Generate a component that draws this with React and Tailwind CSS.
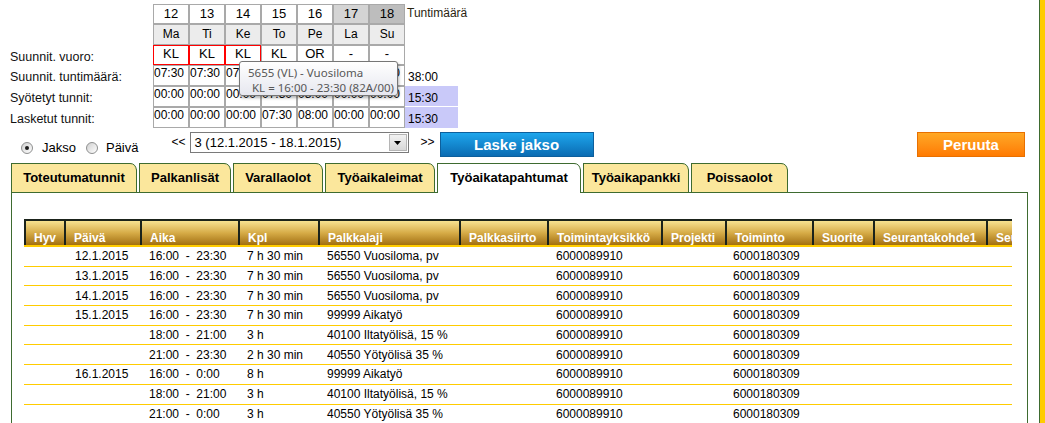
import React from "react";

const days = [
  { n: "12", d: "Ma", v: "KL", red: true, p: "07:30", s: "00:00", l: "00:00", nbg: "bg-white" },
  { n: "13", d: "Ti", v: "KL", red: true, p: "07:30", s: "00:00", l: "00:00", nbg: "bg-white" },
  { n: "14", d: "Ke", v: "KL", red: true, p: "07:30", s: "00:00", l: "00:00", nbg: "bg-white" },
  { n: "15", d: "To", v: "KL", red: false, p: "07:30", s: "07:30", l: "07:30", nbg: "bg-white" },
  { n: "16", d: "Pe", v: "OR", red: false, p: "08:00", s: "08:00", l: "08:00", nbg: "bg-white" },
  { n: "17", d: "La", v: "-", red: false, p: "00:00", s: "00:00", l: "00:00", nbg: "bg-[#d4d4d4]" },
  { n: "18", d: "Su", v: "-", red: false, p: "00:00", s: "00:00", l: "00:00", nbg: "bg-[#bdbdbd]" },
];

const cellBase = "w-[36px] h-full shrink-0 border";

function Label({ children }) {
  return (
    <div className="w-[153px] shrink-0 h-full pl-[10px] flex items-center pt-[3px] text-[12.5px] leading-[14px] text-[#111]">
      {children}
    </div>
  );
}

function TopGrid() {
  return (
    <div className="relative pt-[4px] h-[128px]">
      <div className="flex h-[20px]">
        <div className="w-[153px] shrink-0" />
        {days.map((x) => (
          <div key={x.n} className={`${cellBase} border-[#a9a9a9] ${x.nbg} text-center text-[13px] leading-[18px]`}>
            {x.n}
          </div>
        ))}
        <div className="pl-[2px] text-[12px] leading-[18px] text-[#2a2410]">Tuntimäärä</div>
      </div>
      <div className="flex h-[21px]">
        <div className="w-[153px] shrink-0" />
        {days.map((x) => (
          <div key={x.n} className={`${cellBase} border-[#a9a9a9] bg-[#ececec] text-center text-[12px] leading-[19px]`}>
            {x.d}
          </div>
        ))}
      </div>
      <div className="flex h-[20px]">
        <Label>Suunnit. vuoro:</Label>
        {days.map((x) => (
          <div
            key={x.n}
            className={`${cellBase} ${x.red ? "border-[#ff0000]" : "border-[#a9a9a9]"} bg-white text-center text-[13px] leading-[15px]`}
          >
            {x.v}
          </div>
        ))}
      </div>
      <div className="flex h-[21px]">
        <Label>Suunnit. tuntimäärä:</Label>
        {days.map((x) => (
          <div key={x.n} className={`${cellBase} border-[#a9a9a9] bg-white text-[12px] leading-[14px] whitespace-nowrap overflow-hidden`}>
            {x.p}
          </div>
        ))}
        <div className="w-[53px] h-full flex items-center pt-[3px] pl-[3px] text-[12px]">38:00</div>
      </div>
      <div className="flex h-[21px]">
        <Label>Syötetyt tunnit:</Label>
        {days.map((x) => (
          <div key={x.n} className={`${cellBase} border-[#a9a9a9] bg-white text-[12px] leading-[14px] whitespace-nowrap overflow-hidden`}>
            {x.s}
          </div>
        ))}
        <div className="w-[53px] h-[20px] bg-[#c9c9f9] flex items-center pt-[3px] pl-[3px] text-[12px]">15:30</div>
      </div>
      <div className="flex h-[21px]">
        <Label>Lasketut tunnit:</Label>
        {days.map((x) => (
          <div key={x.n} className={`${cellBase} border-[#a9a9a9] bg-white text-[12px] leading-[14px] whitespace-nowrap overflow-hidden`}>
            {x.l}
          </div>
        ))}
        <div className="w-[53px] h-[21px] bg-[#c9c9f9] flex items-center pt-[3px] pl-[3px] text-[12px]">15:30</div>
      </div>

      <div className="absolute left-[239px] top-[61px] w-[159px] h-[35px] rounded-[3px] border border-[#767676] bg-gradient-to-b from-white to-[#e6e7ef] shadow-[1px_2px_3px_rgba(0,0,0,0.3)] pl-[8px] pt-[3px] font-['Noto_Sans',sans-serif] text-[11.5px] leading-[15px] text-[#575757] whitespace-pre">
        <div>5655 (VL) - Vuosiloma</div>
        <div className="pl-[4px]">KL = 16:00 - 23:30 (82A/00)</div>
      </div>
    </div>
  );
}

function Radio({ checked }) {
  return (
    <span className="w-[12px] h-[12px] shrink-0 rounded-full border border-[#8e8f8f] bg-gradient-to-br from-[#d0d0d0] to-white flex items-center justify-center">
      {checked && <span className="w-[4px] h-[4px] rounded-full bg-[#1c1c1c]" />}
    </span>
  );
}

function Controls() {
  return (
    <div className="flex items-start h-[25px] mt-[4px]">
      <div className="flex items-center pl-[21px] mt-[9px] text-[13px] leading-[14px]">
        <Radio checked />
        <span className="ml-[9px]">Jakso</span>
        <span className="ml-[10px]">
          <Radio />
        </span>
        <span className="ml-[8px]">Päivä</span>
      </div>
      <span className="ml-[33px] mt-[3px] text-[12px] leading-[14px]">&lt;&lt;</span>
      <div className="ml-[4px] w-[219px] h-[21px] border border-[#7a7a7a] bg-white flex items-stretch">
        <div className="flex-1 pl-[4px] text-[13px] leading-[19px] whitespace-nowrap">3 (12.1.2015 - 18.1.2015)</div>
        <div className="w-[18px] m-px border border-[#b5b5b5] bg-gradient-to-b from-[#f2f2f2] to-[#d8d8d8] flex items-center justify-center">
          <svg width="7" height="4" viewBox="0 0 7 4">
            <path d="M0 0 H7 L3.5 4 Z" fill="#000" />
          </svg>
        </div>
      </div>
      <span className="ml-[12px] mt-[3px] text-[12px] leading-[14px]">&gt;&gt;</span>
      <button className="ml-[5px] w-[154px] h-[25px] border border-[#0d5f9c] bg-gradient-to-b from-[#1ea6ec] to-[#0b6cb3] text-white font-bold text-[15px] leading-[23px] text-center">
        Laske jakso
      </button>
      <button className="ml-auto mr-[14px] w-[108px] h-[25px] border border-[#e87000] bg-gradient-to-b from-[#ffa824] to-[#ff7a00] text-white font-bold text-[15px] leading-[23px] text-center">
        Peruuta
      </button>
    </div>
  );
}

function Fold() {
  return (
    <svg className="absolute -top-px -right-px" width="7" height="7" viewBox="0 0 7 7">
      <path d="M0 0 H7 V7 H6.5 Q5.5 0.5 0 0.5 Z" fill="#fff" />
      <path d="M0 0.5 Q5.5 0.5 6.5 7" fill="none" stroke="#3e6b30" strokeWidth="1" />
    </svg>
  );
}

const tabs = [
  { t: "Toteutumatunnit", w: "w-[126px]" },
  { t: "Palkanlisät", w: "w-[92px]" },
  { t: "Varallaolot", w: "w-[90px]" },
  { t: "Työaikaleimat", w: "w-[110px]" },
  { t: "Työaikatapahtumat", w: "w-[144px]", active: true },
  { t: "Työaikapankki", w: "w-[106px]" },
  { t: "Poissaolot", w: "w-[97px]" },
];

function Tabs() {
  return (
    <div className="flex items-start h-[29px] mt-[6px] pl-[11px] gap-[2px]">
      {tabs.map((x) => (
        <div
          key={x.t}
          className={`relative ${x.w} shrink-0 border border-b-0 border-[#3e6b30] flex items-center justify-center font-bold text-[13px] ${
            x.active ? "h-[30px] z-10 bg-white pb-px" : "h-[29px] bg-[#fbe79c]"
          }`}
        >
          {x.t}
          <Fold />
        </div>
      ))}
    </div>
  );
}

const W = [
  "w-[40px]",
  "w-[76px]",
  "w-[98px]",
  "w-[80px]",
  "w-[141px]",
  "w-[88px]",
  "w-[114px]",
  "w-[64px]",
  "w-[87px]",
  "w-[61px]",
  "w-[113px]",
  "w-[120px]",
];

const heads = [
  "Hyv",
  "Päivä",
  "Aika",
  "Kpl",
  "Palkkalaji",
  "Palkkasiirto",
  "Toimintayksikkö",
  "Projekti",
  "Toiminto",
  "Suorite",
  "Seurantakohde1",
  "Seurantakohde2",
];

const rows = [
  ["", "12.1.2015", "16:00  -  23:30", "7 h 30 min", "56550 Vuosiloma, pv"],
  ["", "13.1.2015", "16:00  -  23:30", "7 h 30 min", "56550 Vuosiloma, pv"],
  ["", "14.1.2015", "16:00  -  23:30", "7 h 30 min", "56550 Vuosiloma, pv"],
  ["", "15.1.2015", "16:00  -  23:30", "7 h 30 min", "99999 Aikatyö"],
  ["", "", "18:00  -  21:00", "3 h", "40100 Iltatyölisä, 15 %"],
  ["", "", "21:00  -  23:30", "2 h 30 min", "40550 Yötyölisä 35 %"],
  ["", "16.1.2015", "16:00  -  0:00", "8 h", "99999 Aikatyö"],
  ["", "", "18:00  -  21:00", "3 h", "40100 Iltatyölisä, 15 %"],
  ["", "", "21:00  -  0:00", "3 h", "40550 Yötyölisä 35 %"],
];

function Panel() {
  return (
    <div className="ml-[11px] w-[1017px] h-[300px] shrink-0 border border-[#3e6b30] pt-[26px] pl-[12px]">
      <div className="w-[988px] overflow-hidden">
        <div className="flex h-[28px] w-[1108px] border-t-2 border-b-2 border-t-[#1b231b] border-b-[#ffcc00] bg-gradient-to-b from-[#f7e290] via-[#d6ab46] to-[#a2700c]">
          {heads.map((h, i) => (
            <div
              key={h}
              className={`${W[i]} shrink-0 h-full border-l-2 border-[#1b231b] pl-[8px] flex items-end text-white font-bold text-[12px] leading-[14px] whitespace-nowrap overflow-hidden`}
            >
              {h}
            </div>
          ))}
        </div>
        {rows.map((r, ri) => (
          <div key={ri} className="flex w-[1108px] h-[19.7px] border-b border-[#ffcc00] items-center text-[12px] leading-[14px]">
            <div className={`${W[0]} shrink-0`} />
            <div className={`${W[1]} shrink-0 pl-[11px]`}>{r[1]}</div>
            <div className={`${W[2]} shrink-0 pl-[9px] whitespace-pre`}>{r[2]}</div>
            <div className={`${W[3]} shrink-0 pl-[9px] whitespace-pre`}>{r[3]}</div>
            <div className={`${W[4]} shrink-0 pl-[9px] whitespace-pre`}>{r[4]}</div>
            <div className={`${W[5]} shrink-0`} />
            <div className={`${W[6]} shrink-0 pl-[9px]`}>6000089910</div>
            <div className={`${W[7]} shrink-0`} />
            <div className={`${W[8]} shrink-0 pl-[8px]`}>6000180309</div>
            <div className={`${W[9]} shrink-0`} />
            <div className={`${W[10]} shrink-0`} />
            <div className={`${W[11]} shrink-0`} />
          </div>
        ))}
      </div>
    </div>
  );
}

export default function App() {
  return (
    <div className="flex w-full h-[423px] overflow-hidden bg-white font-['Liberation_Sans',Arial,sans-serif] text-black">
      <div className="w-[1039px] shrink-0 flex flex-col">
        <TopGrid />
        <Controls />
        <Tabs />
        <Panel />
      </div>
      <div className="w-px shrink-0 bg-[#3e6b30]" />
      <div className="flex-1 bg-[#ffcc00]" />
    </div>
  );
}
